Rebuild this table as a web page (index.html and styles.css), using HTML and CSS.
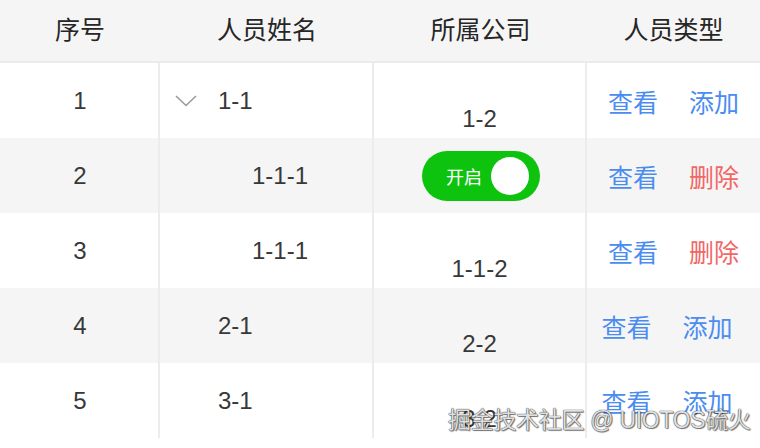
FILE: index.html
```html
<!DOCTYPE html>
<html lang="zh-CN">
<head>
<meta charset="utf-8">
<title>表格</title>
<link rel="stylesheet" href="styles.css">
</head>
<body>
<div class="page">
  <div class="table">
    <div class="row head">
      <div class="cell cjk">序号</div>
      <div class="cell cjk">人员姓名</div>
      <div class="cell cjk">所属公司</div>
      <div class="cell cjk">人员类型</div>
    </div>

    <div class="row">
      <div class="cell c1">1</div>
      <div class="cell c2"><svg class="chev" width="22" height="12" viewBox="0 0 22 12"><path d="M1 1 L11 10.5 L21 1" fill="none" stroke="#9a9a9a" stroke-width="1.6"/></svg><span class="name">1-1</span></div>
      <div class="cell c3 low">1-2</div>
      <div class="cell c4"><span class="link blue">查看</span><span class="link blue">添加</span></div>
    </div>

    <div class="row stripe">
      <div class="cell c1">2</div>
      <div class="cell c2 lvl2">1-1-1</div>
      <div class="cell c3"><div class="switch"><span class="sw-text">开启</span><span class="knob"></span></div></div>
      <div class="cell c4"><span class="link blue">查看</span><span class="link red">删除</span></div>
    </div>

    <div class="row">
      <div class="cell c1">3</div>
      <div class="cell c2 lvl2">1-1-1</div>
      <div class="cell c3 low">1-1-2</div>
      <div class="cell c4"><span class="link blue">查看</span><span class="link red">删除</span></div>
    </div>

    <div class="row stripe">
      <div class="cell c1">4</div>
      <div class="cell c2 lvl1">2-1</div>
      <div class="cell c3 low">2-2</div>
      <div class="cell c4 shift"><span class="link blue">查看</span><span class="link blue">添加</span></div>
    </div>

    <div class="row">
      <div class="cell c1">5</div>
      <div class="cell c2 lvl1">3-1</div>
      <div class="cell c3 low">3-2</div>
      <div class="cell c4 shift"><span class="link blue">查看</span><span class="link blue">添加</span></div>
    </div>
  </div>
  <div class="watermark">掘金技术社区 @ UIOTOS硫火</div>
</div>
</body>
</html>
```

FILE: styles.css
```css
html, body {
  margin: 0;
  padding: 0;
  background: #ffffff;
}

.page {
  position: relative;
  width: 760px;
  height: 448px;
  overflow: hidden;
  font-family: "Liberation Sans", "Noto Sans CJK SC", sans-serif;
  color: #383838;
}

.table {
  display: flex;
  flex-direction: column;
}

.row {
  display: grid;
  grid-template-columns: 160px 214px 213px 173px;
  height: 75px;
  background: #ffffff;
}

.row.stripe {
  background: #f5f5f5;
}

.row.head {
  height: 61px;
  background: #f5f5f5;
  border-bottom: 2px solid #ebebeb;
}

.cell {
  display: flex;
  align-items: center;
  justify-content: center;
  font-size: 24px;
  box-sizing: border-box;
}

.cell.cjk {
  font-size: 25px;
}

.head .cell {
  color: #262626;
  padding-bottom: 6px;
}

.c1, .c2, .c3 {
  border-right: 2px solid #ececec;
}

.c1 {
  padding-left: 2px;
}

.c2 {
  justify-content: flex-start;
  padding-left: 58px;
}

.c2 .chev {
  margin-left: -43px;
  margin-right: 21px;
  margin-top: 1px;
}

.c2.lvl2 {
  padding-left: 92px;
}

.c2.lvl1 {
  padding-left: 58px;
}

.c3.low {
  padding-top: 36px;
}

.c4 {
  gap: 31px;
  padding-left: 0;
}

.c4.shift {
  padding-right: 13px;
}

.link {
  font-size: 25px;
}

.link.blue {
  color: #4a8cf0;
}

.link.red {
  color: #f26666;
}

.switch {
  display: flex;
  align-items: center;
  width: 118px;
  height: 50px;
  border-radius: 25px;
  background: #0ec30e;
  box-sizing: border-box;
  padding-left: 24px;
  padding-right: 11px;
  margin-left: 3px;
  margin-top: 1px;
}

.sw-text {
  color: #ffffff;
  font-size: 18px;
  flex: 1;
}

.knob {
  width: 38px;
  height: 38px;
  border-radius: 50%;
  background: #ffffff;
}

.watermark {
  position: absolute;
  left: 448px;
  top: 401px;
  font-size: 23px;
  color: rgba(255, 255, 255, 0.85);
  text-shadow: 0 0 1px #3a3a3a, 0 0 1px #3a3a3a, 1px 1px 1px rgba(0,0,0,0.5);
  white-space: nowrap;
  letter-spacing: -0.3px;
}
```
